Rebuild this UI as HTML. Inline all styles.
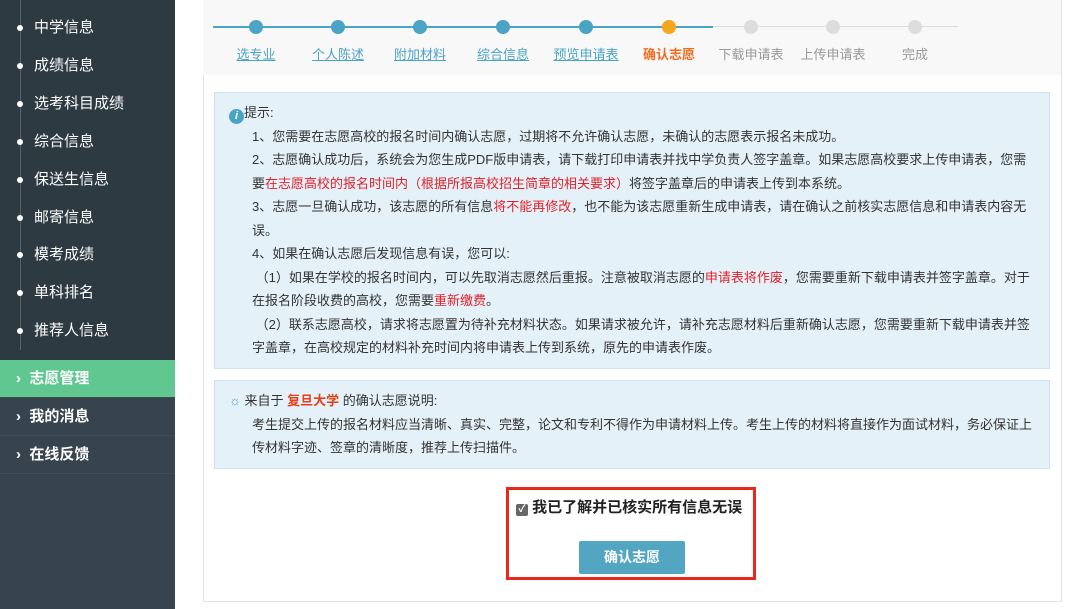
<!DOCTYPE html>
<html><head><meta charset="utf-8"><style>
*{margin:0;padding:0;box-sizing:border-box}
body{width:1080px;height:609px;overflow:hidden;background:#fff;font-family:"Liberation Sans","Noto Sans CJK SC",sans-serif;position:relative}
.side{position:absolute;left:0;top:0;width:175px;height:609px;background:#37444d}
.sub{position:absolute;left:0;top:0;width:175px;height:360px;background:#2d3a42}
.vl{position:absolute;left:20px;top:0;width:1px;height:350px;background:#55636c}
.si{position:absolute;left:34px;color:#fff;font-size:15px;line-height:20px}
.dot{position:absolute;left:17px;width:6px;height:6px;border-radius:3px;background:#fff}
.mi{position:absolute;left:0;width:175px;height:38px;color:#fff;font-size:15px;font-weight:bold;line-height:38px;padding-left:16px;border-bottom:1px solid #404d56}
.main{position:absolute;left:203px;top:-2px;width:859px;height:604px;border:1px solid #e3e3e3;border-top:none}
.steps{position:absolute;left:203px;top:0;width:858px;height:75px;background:#f8f8f8}
.c{position:absolute;top:20px;width:14px;height:14px;border-radius:7px;background:#4ba3c6}
.lbl{position:absolute;top:44px;font-size:13px;color:#4ba3c6;text-decoration:underline;transform:translateX(-50%);white-space:nowrap}
.box{position:absolute;left:214px;width:836px;background:#e4f1f8;border:1px solid #cfe3ee;font-size:13px;color:#333;line-height:23.5px}
.r{color:#e4202a}
</style></head><body>
<div class="side"><div class="sub"></div><div class="vl"></div>
<div class="dot" style="top:25px"></div><div class="si" style="top:18px">中学信息</div>
<div class="dot" style="top:63px"></div><div class="si" style="top:56px">成绩信息</div>
<div class="dot" style="top:101px"></div><div class="si" style="top:94px">选考科目成绩</div>
<div class="dot" style="top:139px"></div><div class="si" style="top:132px">综合信息</div>
<div class="dot" style="top:177px"></div><div class="si" style="top:170px">保送生信息</div>
<div class="dot" style="top:215px"></div><div class="si" style="top:208px">邮寄信息</div>
<div class="dot" style="top:252px"></div><div class="si" style="top:245px">模考成绩</div>
<div class="dot" style="top:290px"></div><div class="si" style="top:283px">单科排名</div>
<div class="dot" style="top:328px"></div><div class="si" style="top:321px">推荐人信息</div>
<div class="mi" style="top:360px;background:#5fc78f">›&nbsp; 志愿管理</div>
<div class="mi" style="top:398px">›&nbsp; 我的消息</div>
<div class="mi" style="top:436px">›&nbsp; 在线反馈</div>
</div>
<div class="main"></div>
<div class="steps">
<div style="position:absolute;left:10px;top:26px;width:500px;height:2px;background:#4ba3c6"></div>
<div style="position:absolute;left:510px;top:26px;width:245px;height:1px;background:#dcdcdc"></div>
<div class="c" style="left:46px"></div><div class="c" style="left:128px"></div><div class="c" style="left:210px"></div><div class="c" style="left:293px"></div><div class="c" style="left:376px"></div>
<div class="c" style="left:459px;background:#f3a81c"></div>
<div class="c" style="left:541px;background:#ddd"></div><div class="c" style="left:623px;background:#ddd"></div><div class="c" style="left:705px;background:#ddd"></div>
<div class="lbl" style="left:53px">选专业</div><div class="lbl" style="left:135px">个人陈述</div><div class="lbl" style="left:217px">附加材料</div><div class="lbl" style="left:300px">综合信息</div><div class="lbl" style="left:383px">预览申请表</div>
<div class="lbl" style="left:466px;color:#f26b1d;font-weight:bold;text-decoration:none">确认志愿</div>
<div class="lbl" style="left:548px;color:#999;text-decoration:none">下载申请表</div><div class="lbl" style="left:630px;color:#999;text-decoration:none">上传申请表</div><div class="lbl" style="left:712px;color:#999;text-decoration:none">完成</div>
</div>
<div class="box" style="top:92px;height:277px;padding:8px 14px 0 14px">
<div><span style="display:inline-block;width:15px;height:15px;border-radius:8px;background:#4ba3c6;color:#fff;font-size:11px;font-style:italic;font-weight:bold;text-align:center;line-height:15px;vertical-align:-2px">i</span>提示:</div>
<div style="padding-left:23px">
<div>1、您需要在志愿高校的报名时间内确认志愿，过期将不允许确认志愿，未确认的志愿表示报名未成功。</div>
<div>2、志愿确认成功后，系统会为您生成PDF版申请表，请下载打印申请表并找中学负责人签字盖章。如果志愿高校要求上传申请表，您需要<span class="r">在志愿高校的报名时间内（根据所报高校招生简章的相关要求）</span>将签字盖章后的申请表上传到本系统。</div>
<div>3、志愿一旦确认成功，该志愿的所有信息<span class="r">将不能再修改</span>，也不能为该志愿重新生成申请表，请在确认之前核实志愿信息和申请表内容无误。</div>
<div>4、如果在确认志愿后发现信息有误，您可以:</div>
<div>&nbsp;（1）如果在学校的报名时间内，可以先取消志愿然后重报。注意被取消志愿的<span class="r">申请表将作废</span>，您需要重新下载申请表并签字盖章。对于在报名阶段收费的高校，您需要<span class="r">重新缴费</span>。</div>
<div>&nbsp;（2）联系志愿高校，请求将志愿置为待补充材料状态。如果请求被允许，请补充志愿材料后重新确认志愿，您需要重新下载申请表并签字盖章，在高校规定的材料补充时间内将申请表上传到系统，原先的申请表作废。</div>
</div></div>
<div class="box" style="top:380px;height:89px;padding:8px 14px 0 14px">
<div><span style="color:#4ba3c6">☼</span> 来自于 <b style="color:#e4401a">复旦大学</b> 的确认志愿说明:</div>
<div style="padding-left:23px">考生提交上传的报名材料应当清晰、真实、完整，论文和专利不得作为申请材料上传。考生上传的材料将直接作为面试材料，务必保证上传材料字迹、签章的清晰度，推荐上传扫描件。</div>
</div>
<div style="position:absolute;left:506px;top:487px;width:250px;height:93px;border:3px solid #e8281c"></div>
<div style="position:absolute;left:516px;top:496px;font-size:15px;font-weight:bold;color:#222;white-space:nowrap"><span style="display:inline-block;width:12px;height:12px;background:#666;color:#fff;font-size:10px;line-height:12px;text-align:center;border-radius:2px;vertical-align:0px">✓</span> 我已了解并已核实所有信息无误</div>
<div style="position:absolute;left:579px;top:541px;width:106px;height:33px;background:#52a6c2;border-radius:2px;color:#fff;font-size:14px;font-weight:bold;text-align:center;line-height:33px">确认志愿</div>
</body></html>
